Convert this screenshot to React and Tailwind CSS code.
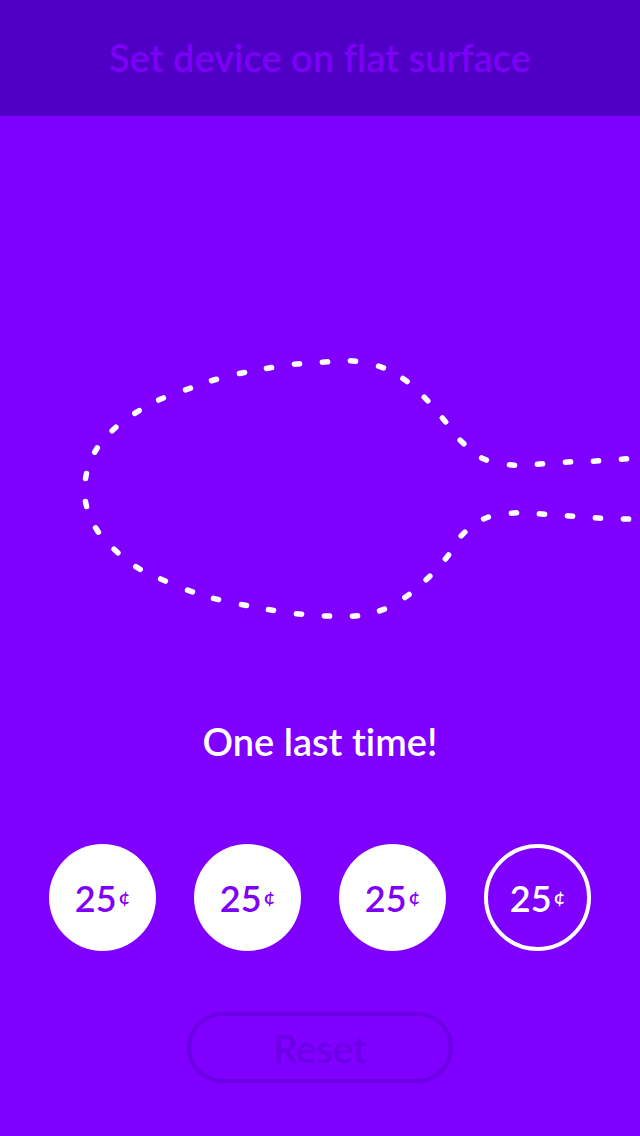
const points = [
    [668, 457], [652, 458], [624, 459], [596, 461], [568, 462], [540, 464], [512, 465], [484, 459], [462, 442],
    [444, 420], [426, 399], [405, 380], [381, 367], [353, 361], [325, 362], [297, 364],
    [269, 368], [242, 373], [214, 380], [188, 389], [161, 399], [137, 412], [114, 429],
    [96, 450], [86, 476], [86, 504], [97, 530], [116, 551], [138, 568], [163, 580],
    [190, 591], [216, 599], [244, 605], [271, 610], [299, 614], [327, 616], [355, 616],
    [382, 610], [407, 596], [428, 578], [447, 557], [463, 534], [486, 518], [514, 513],
    [542, 514], [570, 516], [598, 518], [626, 519], [654, 520], [670, 520],
];

// one short rounded dash per point, turned along the curve
const dashes = points.slice(1, -1).map((p, i) => {
    const prev = points[i];
    const next = points[i + 2];
    const dx = next[0] - prev[0];
    const dy = next[1] - prev[1];
    const len = Math.hypot(dx, dy);
    const ux = (dx / len) * 2.6;
    const uy = (dy / len) * 2.6;
    return { x1: p[0] - ux, y1: p[1] - uy, x2: p[0] + ux, y2: p[1] + uy };
});

const Coin = ({ filled }) => (
    <div
        className={
            filled
                ? "w-[107px] h-[107px] rounded-full bg-white flex items-center justify-center text-[#7f00f6]"
                : "w-[107px] h-[107px] rounded-full border-4 border-white flex items-center justify-center text-white"
        }
    >
        <span className="flex items-start font-semibold leading-none">
            <span className="text-[36px]">25</span>
            <span className="text-[20px] mt-[6px] ml-[2px]">¢</span>
        </span>
    </div>
);

let App = () => {
    return (
        <div
            className="w-[640px] h-[1136px] bg-[#7f00ff] flex flex-col overflow-hidden [font-variant-ligatures:none]"
            style={{ fontFamily: "Lato, 'Noto Sans', sans-serif" }}
        >
            <div className="h-[116px] bg-[#4f00c4] flex items-center justify-center">
                <h1 className="text-[#7c00f7] text-[38px] font-semibold leading-none -mt-[2px]">Set device on flat surface</h1>
            </div>

            <svg width="640" height="584" viewBox="0 116 640 584" className="block">
                {dashes.map((d, i) => (
                    <line
                        key={i}
                        x1={d.x1}
                        y1={d.y1}
                        x2={d.x2}
                        y2={d.y2}
                        stroke="white"
                        strokeWidth="5.5"
                        strokeLinecap="round"
                    />
                ))}
            </svg>

            <p className="text-white text-[38px] font-semibold text-center leading-none mt-[22px]">One last time!</p>

            <div className="flex justify-between px-[49px] mt-[84px]">
                <Coin filled />
                <Coin filled />
                <Coin filled />
                <Coin />
            </div>

            <div className="flex justify-center mt-[61px]">
                <button className="w-[266px] h-[71px] rounded-full border-4 border-[#6c00e4] text-[#6c00e6] text-[38px] font-semibold leading-none">
                    Reset
                </button>
            </div>
        </div>
    );
};

export default App
